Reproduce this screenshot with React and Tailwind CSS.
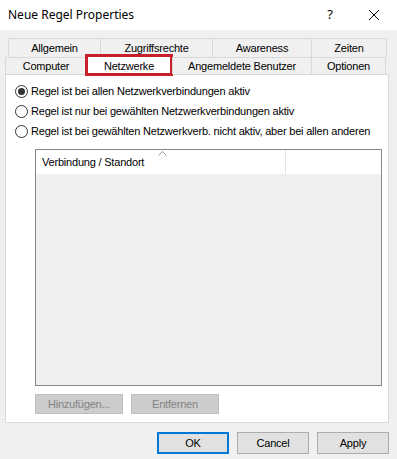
import React from 'react';

const Radio = ({ checked, label }) => (
    <div className="flex items-center h-[20px] whitespace-nowrap">
        <span className="w-[13px] h-[13px] shrink-0 rounded-full border border-[#333] bg-white flex items-center justify-center">
            {checked && <span className="w-[7px] h-[7px] rounded-full bg-[#333]" />}
        </span>
        <span className="ml-[3px]">{label}</span>
    </div>
);

const Tab = ({ w, children }) => (
    <div className={`${w} h-full flex items-center justify-center border-t border-l border-r border-[#d9d9d9] bg-[#f0f0f0] -ml-px first:ml-0 whitespace-nowrap`}>
        {children}
    </div>
);

const App = () => {
    return (
        <div className="w-[397px] h-[459px] bg-[#f0f0f0] text-[11px] tracking-[-0.2px] text-black overflow-hidden" style={{ fontFamily: '"Liberation Sans", Arial, sans-serif' }}>
            {/* title bar */}
            <div className="h-[30px] bg-white flex items-center pl-[8px] text-[12px] tracking-normal" style={{ fontFamily: '"Noto Sans", "Liberation Sans", sans-serif' }}>
                <span className="flex-1">Neue Regel Properties</span>
                <span className="w-[20px] text-center mr-[28px] text-[13px]">?</span>
                <svg width="12" height="12" viewBox="0 0 12 12" className="mr-[17px]">
                    <path d="M1 1 L11 11 M11 1 L1 11" stroke="#000" strokeWidth="1" />
                </svg>
            </div>

            <div className="px-[5px] pt-[8px]">
                {/* tabs */}
                <div className="flex h-[19px] ml-[3px]">
                    <Tab w="w-[93px]">Allgemein</Tab>
                    <Tab w="w-[113px]">Zugriffsrechte</Tab>
                    <Tab w="w-[100px]">Awareness</Tab>
                    <Tab w="w-[76px]">Zeiten</Tab>
                </div>
                <div className="flex h-[17px] items-end relative z-10">
                    <Tab w="w-[82px]">Computer</Tab>
                    <div className="w-[88px] h-[22px] -ml-[2px] -mb-[2px] bg-white border-[3px] border-[#c8202b] flex items-start justify-center pt-[1px]">
                        Netzwerke
                    </div>
                    <Tab w="w-[140px]">Angemeldete Benutzer</Tab>
                    <Tab w="w-[75px]">Optionen</Tab>
                </div>

                {/* panel */}
                <div className="w-[384px] h-[349px] bg-white border border-[#d9d9d9] pt-[6px] pl-[9px]">
                    <Radio checked label="Regel ist bei allen Netzwerkverbindungen aktiv" />
                    <Radio label="Regel ist nur bei gewählten Netzwerkverbindungen aktiv" />
                    <Radio label="Regel ist bei gewählten Netzwerkverb. nicht aktiv, aber bei allen anderen" />

                    <div className="ml-[20px] mt-[8px] w-[347px] h-[237px] border border-[#828790] bg-[#f0f0f0] flex flex-col">
                        <div className="h-[24px] bg-white flex relative">
                            <div className="w-[250px] border-r border-[#e5e5e5] pl-[6px] flex items-center">Verbindung / Standort</div>
                            <svg width="9" height="5" viewBox="0 0 9 5" className="absolute left-[122px] top-[1px]">
                                <path d="M0.5 4.5 L4.5 0.5 L8.5 4.5" stroke="#9a9a9a" fill="none" strokeWidth="1" />
                            </svg>
                        </div>
                    </div>

                    <div className="flex gap-[8px] ml-[20px] mt-[8px]">
                        <div className="w-[88px] h-[20px] bg-[#cccccc] border border-[#bfbfbf] text-[#838383] flex items-center justify-center">Hinzufügen...</div>
                        <div className="w-[88px] h-[20px] bg-[#cccccc] border border-[#bfbfbf] text-[#838383] flex items-center justify-center">Entfernen</div>
                    </div>
                </div>

                {/* dialog buttons */}
                <div className="flex justify-end gap-[8px] mt-[9px] pr-[3px]">
                    <div className="w-[72px] h-[22px] bg-[#e1e1e1] border-2 border-[#0078d7] flex items-center justify-center">OK</div>
                    <div className="w-[72px] h-[22px] bg-[#e1e1e1] border border-[#adadad] flex items-center justify-center">Cancel</div>
                    <div className="w-[72px] h-[22px] bg-[#e1e1e1] border border-[#adadad] flex items-center justify-center">Apply</div>
                </div>
            </div>
        </div>
    );
};

export default App;
